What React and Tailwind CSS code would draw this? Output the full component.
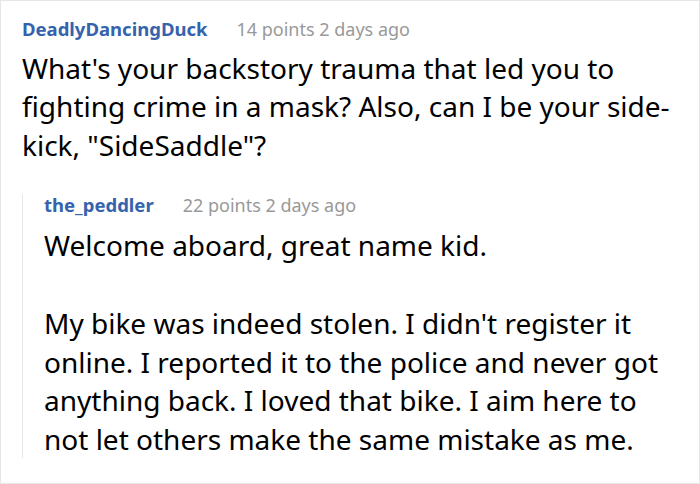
import React from 'react';

const Meta = ({ user, points }) => (
    <div className="flex items-baseline gap-[29px] leading-none">
        <span className="text-[18.5px] font-bold text-[#3563ad]">{user}</span>
        <span className="text-[18px] text-[#999999]">{points} points 2 days ago</span>
    </div>
);

const App = () => {
    return (
        <div className="w-[700px] h-[484px] overflow-hidden bg-white border border-[#e6e6e6] font-['Noto_Sans',sans-serif] text-black">
            <div className="pl-[21px] pt-[19px]">
                <Meta user="DeadlyDancingDuck" points={14} />
                <p className="mt-[10px] text-[28px] leading-[38.5px] w-[660px]">
                    What's your backstory trauma that led you to fighting crime in a mask? Also, can I be your side-kick, "SideSaddle"?
                </p>
                <div className="mt-[30px] border-l border-[#e6e6e6] pl-[21px] pt-[2px]">
                    <Meta user="the_peddler" points={22} />
                    <p className="mt-[11px] text-[28px] leading-[38.5px] w-[640px]">Welcome aboard, great name kid.</p>
                    <p className="mt-[40px] text-[28px] leading-[38.5px] w-[615px]">
                        My bike was indeed stolen. I didn't register it online. I reported it to the police and never got anything back. I loved that bike. I aim here to not let others make the same mistake as me.
                    </p>
                </div>
            </div>
        </div>
    );
};

export default App;
